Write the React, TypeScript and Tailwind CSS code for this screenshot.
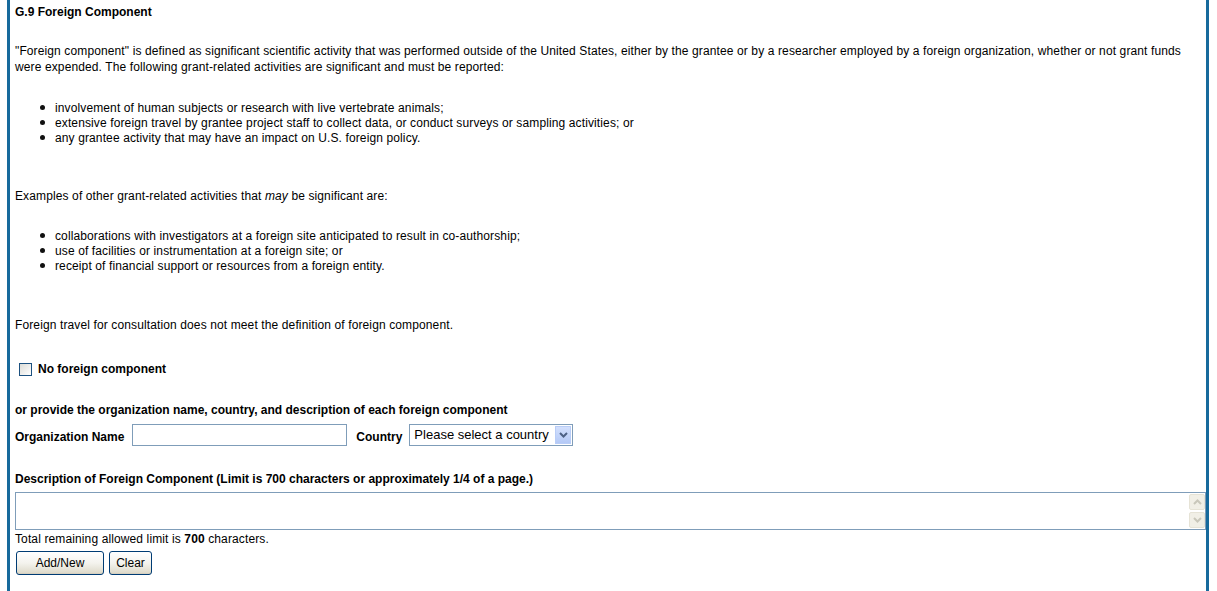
import React from "react";

function Bullets({ items }: { items: React.ReactNode[] }) {
  return (
    <ul className="pl-[25px]">
      {items.map((t, i) => (
        <li key={i} className="flex items-center h-[15px]">
          <span className="w-[5px] h-[5px] rounded-full bg-[#111] mr-[10px]" />
          <span>{t}</span>
        </li>
      ))}
    </ul>
  );
}

function XpButton({ label, w }: { label: string; w: string }) {
  return (
    <button
      className={`${w} h-[24px] rounded-[3px] border border-[#003c74] bg-gradient-to-b from-white via-[#f4f3ee] to-[#dcd8c7] text-[12px] text-black shadow-[inset_0_-1px_0_#d6d0c0]`}
    >
      {label}
    </button>
  );
}

export default function App() {
  return (
    <div
      className="bg-white w-[1217px] h-[591px] overflow-hidden text-[12px] leading-[16px] tracking-[0.12px] text-black"
      style={{ fontFamily: '"Liberation Sans", Arial, sans-serif' }}
    >
      <div className="ml-[7px] w-[1202px] h-full border-l-[3px] border-r-[3px] border-[#176a9c] pl-[5px] pr-0 pt-[4px]">
        <div className="font-bold tracking-normal">G.9 Foreign Component</div>

        <p className="mt-[24px] pr-[20px] leading-[15.5px]">
          "Foreign component" is defined as significant scientific activity that was performed outside of the United States,
          either by the grantee or by a researcher employed by a foreign organization, whether or not grant funds were
          expended. The following grant-related activities are significant and must be reported:
        </p>

        <div className="mt-[25px]">
          <Bullets
            items={[
              "involvement of human subjects or research with live vertebrate animals;",
              "extensive foreign travel by grantee project staff to collect data, or conduct surveys or sampling activities; or",
              "any grantee activity that may have an impact on U.S. foreign policy.",
            ]}
          />
        </div>

        <p className="mt-[43px]">
          Examples of other grant-related activities that <i>may</i> be significant are:
        </p>

        <div className="mt-[24px]">
          <Bullets
            items={[
              "collaborations with investigators at a foreign site anticipated to result in co-authorship;",
              "use of facilities or instrumentation at a foreign site; or",
              "receipt of financial support or resources from a foreign entity.",
            ]}
          />
        </div>

        <p className="mt-[44px]">Foreign travel for consultation does not meet the definition of foreign component.</p>

        <div className="mt-[28px] flex items-center h-[16px] font-bold tracking-normal">
          <span className="ml-[4px] w-[13px] h-[13px] border border-[#1c5180] bg-gradient-to-br from-[#dcdcd7] to-white mr-[6px]" />
          No foreign component
        </div>

        <div className="mt-[25px] font-bold tracking-normal">
          or provide the organization name, country, and description of each foreign component
        </div>

        <div className="mt-[6px] flex items-center h-[22px] tracking-normal">
          <span className="font-bold mt-[3px]">Organization Name</span>
          <input className="ml-[8px] w-[215px] h-[22px] border border-[#7f9db9] bg-white outline-none" />
          <span className="ml-[9px] font-bold mt-[3px]">Country</span>
          <div className="ml-[7px] w-[164px] h-[22px] border border-[#7f9db9] flex items-center bg-white">
            <span className="pl-[4px] text-[13px] flex-1">Please select a country</span>
            <span className="w-[16px] h-[18px] mr-[1px] bg-gradient-to-b from-[#d3e0fd] to-[#b4c9f6] border border-[#b9cdf7] flex items-center justify-center">
              <svg width="9" height="6" viewBox="0 0 9 6">
                <path d="M1 1 L4.5 4.5 L8 1" stroke="#4d6185" strokeWidth="2" fill="none" />
              </svg>
            </span>
          </div>
        </div>

        <div className="mt-[25px] font-bold tracking-normal">
          Description of Foreign Component (Limit is 700 characters or approximately 1/4 of a page.)
        </div>

        <div className="mt-[5px] w-[1191px] h-[38px] border border-[#7f9db9] flex justify-end bg-white">
          <div className="w-[16px] flex flex-col gap-[2px] pt-[1px]">
            <span className="h-[16px] bg-[#f1efe6] border border-[#e6e3d6] rounded-[2px] flex items-center justify-center">
              <svg width="9" height="6" viewBox="0 0 9 6">
                <path d="M1 5 L4.5 1.5 L8 5" stroke="#c9c7ba" strokeWidth="2" fill="none" />
              </svg>
            </span>
            <span className="h-[16px] bg-[#f1efe6] border border-[#e6e3d6] rounded-[2px] flex items-center justify-center">
              <svg width="9" height="6" viewBox="0 0 9 6">
                <path d="M1 1 L4.5 4.5 L8 1" stroke="#c9c7ba" strokeWidth="2" fill="none" />
              </svg>
            </span>
          </div>
        </div>

        <div className="mt-[1px]">
          Total remaining allowed limit is <b>700</b> characters.
        </div>

        <div className="mt-[4px] ml-[1px] flex gap-[5px] tracking-normal">
          <XpButton label="Add/New" w="w-[88px]" />
          <XpButton label="Clear" w="w-[43px]" />
        </div>
      </div>
    </div>
  );
}
